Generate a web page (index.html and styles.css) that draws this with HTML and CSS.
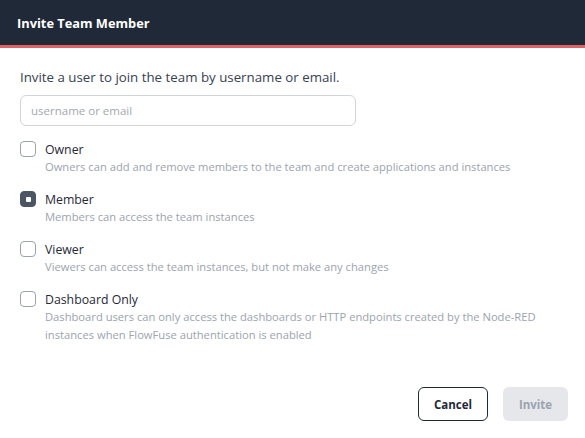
FILE: index.html
```html
<!DOCTYPE html>
<html>
<head>
<meta charset="utf-8">
<link rel="stylesheet" href="styles.css">
</head>
<body>
<div class="dialog">
  <div class="header"><h1 class="title">Invite Team Member</h1></div>
  <div class="content">
    <p class="intro">Invite a user to join the team by username or email.</p>
    <input class="field" type="text" placeholder="username or email">
    <div class="options">
      <div class="option">
        <span class="box"></span>
        <div class="option-text">
          <div class="label">Owner</div>
          <div class="desc">Owners can add and remove members to the team and create applications and instances</div>
        </div>
      </div>
      <div class="option">
        <span class="box checked"><span class="dot"></span></span>
        <div class="option-text">
          <div class="label">Member</div>
          <div class="desc">Members can access the team instances</div>
        </div>
      </div>
      <div class="option">
        <span class="box"></span>
        <div class="option-text">
          <div class="label">Viewer</div>
          <div class="desc">Viewers can access the team instances, but not make any changes</div>
        </div>
      </div>
      <div class="option">
        <span class="box"></span>
        <div class="option-text">
          <div class="label">Dashboard Only</div>
          <div class="desc">Dashboard users can only access the dashboards or HTTP endpoints created by the <span class="nowrap">Node-RED</span><br>instances when FlowFuse authentication is enabled</div>
        </div>
      </div>
    </div>
  </div>
  <div class="footer">
    <button class="btn cancel">Cancel</button>
    <button class="btn invite" disabled>Invite</button>
  </div>
</div>
</body>
</html>
```
FILE: styles.css
```css
* { box-sizing: border-box; }
body {
  margin: 0;
  font-family: "Open Sans", "Noto Sans", sans-serif;
  background: #fff;
  width: 585px;
  height: 438px;
  overflow: hidden;
}
.header {
  height: 48px;
  background: #1f2937;
  border-bottom: 3px solid #e06363;
  display: flex;
  align-items: center;
  padding-left: 17px;
}
.title {
  margin: 0;
  color: #fff;
  font-size: 12.8px;
  font-weight: 700;
}
.content {
  padding: 20px 20px 0 20px;
}
.intro {
  margin: 0;
  font-size: 13.3px;
  color: #374151;
  line-height: 18px;
}
.field {
  display: block;
  margin-top: 9px;
  width: 336px;
  height: 31px;
  border: 1px solid #d1d5db;
  border-radius: 6px;
  padding: 0 10px;
  font-family: inherit;
  font-size: 11.5px;
  color: #374151;
}
.field::placeholder { color: #a3a8b0; }
.options {
  margin-top: 15px;
  display: flex;
  flex-direction: column;
  gap: 15px;
}
.option {
  display: flex;
  gap: 9px;
}
.box {
  flex: none;
  width: 16px;
  height: 16px;
  border: 1px solid #9ca3af;
  border-radius: 4px;
  display: flex;
  align-items: center;
  justify-content: center;
}
.box.checked {
  background: #4b5563;
  border-color: #4b5563;
}
.dot {
  width: 5px;
  height: 5px;
  background: #fff;
  border-radius: 1px;
}
.option-text { padding-top: 1px; }
.label {
  font-size: 12.3px;
  color: #1f2937;
  line-height: 16px;
}
.desc {
  font-size: 11.2px;
  color: #9ca3af;
  line-height: 18px;
  max-width: 520px;
}
.nowrap { white-space: nowrap; }
.footer {
  position: absolute;
  left: 0;
  right: 0;
  top: 387px;
  display: flex;
  justify-content: flex-end;
  gap: 15px;
  padding-right: 17px;
}
.btn {
  height: 34px;
  border-radius: 6px;
  font-family: inherit;
  font-size: 11.5px;
  font-weight: 700;
}
.cancel {
  width: 70px;
  background: #fff;
  border: 1px solid #1f2937;
  color: #1f2937;
}
.invite {
  width: 65px;
  background: #e5e7eb;
  border: none;
  color: #9ca3af;
}
```
